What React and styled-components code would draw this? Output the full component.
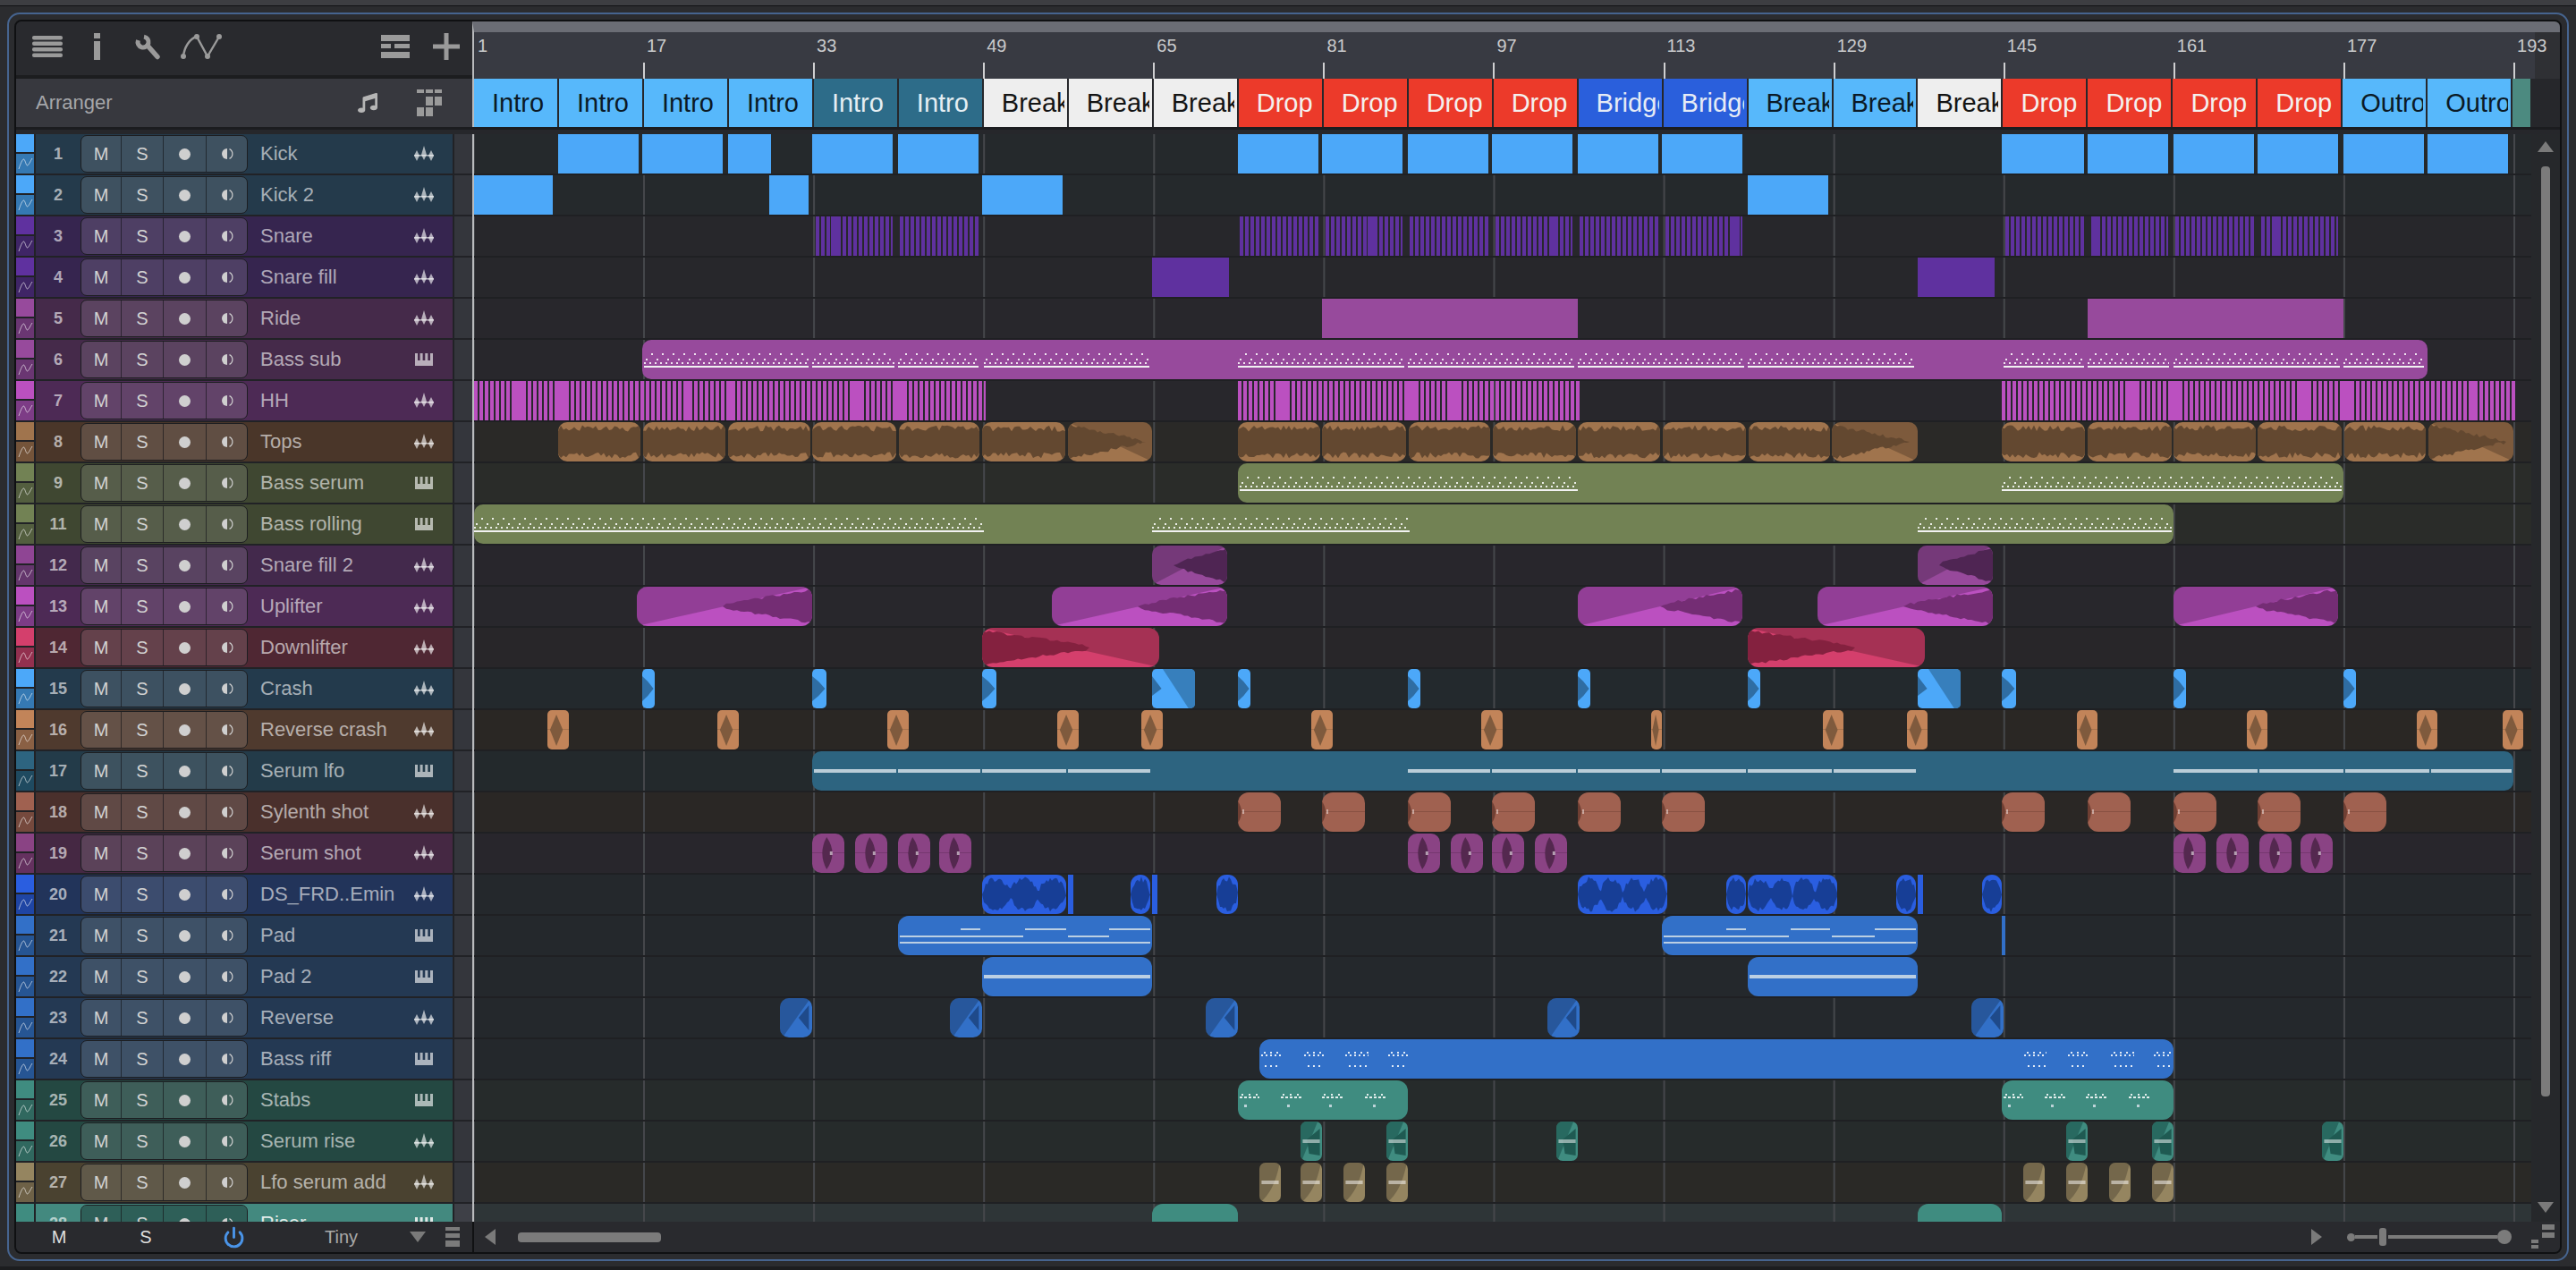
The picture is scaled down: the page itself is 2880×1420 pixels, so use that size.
import React from 'react';
import styled, { createGlobalStyle, css } from 'styled-components';
import { Power } from 'lucide-react';
import { FaMusic } from 'react-icons/fa';

const GlobalStyle = createGlobalStyle`
  html, body {
    margin: 0;
    background: #2b2c2f;
    font-family: "Liberation Sans", Arial, sans-serif;
  }
  * { box-sizing: border-box; }
`;

// page x of the first lane pixel
const ORIGIN = 530;

const pal = {
  kick: { top: '#4ca8f9', bot: '#3579b3', row: '#243a4b', lane: '#25292c', clip: '#4ca8f9', dark: '#2f6da3' },
  snare: { top: '#5f319f', bot: '#3f2566', row: '#36254f', lane: '#27272b', clip: '#5f319f', dark: '#3f2566' },
  ride: { top: '#974a9c', bot: '#6a3672', row: '#452a4a', lane: '#28272c', clip: '#974a9c', dark: '#5e2e62' },
  hh: { top: '#bb50c0', bot: '#7d3c86', row: '#4d2a55', lane: '#28272c', clip: '#bb50c0', dark: '#742d74' },
  tops: { top: '#a0744d', bot: '#74543a', row: '#4a3629', lane: '#2a2927', clip: '#a0744d', dark: '#634830' },
  bass: { top: '#728254', bot: '#535e3f', row: '#3f4731', lane: '#2a2c29', clip: '#728254', dark: '#4a5536' },
  fill2: { top: '#8f4594', bot: '#64366c', row: '#43294c', lane: '#28262c', clip: '#97499b', dark: '#4f2553' },
  down: { top: '#d43f6c', bot: '#93304f', row: '#4f2733', lane: '#282629', clip: '#d43f6c', dark: '#84213f' },
  crash: { top: '#4ca8f9', bot: '#3579b3', row: '#233a4c', lane: '#23292d', clip: '#4ca8f9', dark: '#2f6da3' },
  rev: { top: '#c28459', bot: '#8a6044', row: '#4f3a2e', lane: '#2a2724', clip: '#c28459', dark: '#7f5a3d' },
  lfo: { top: '#2d6480', bot: '#1f4a60', row: '#233b49', lane: '#23292c', clip: '#2d6480', dark: '#1f4a60' },
  syl: { top: '#a06150', bot: '#75493d', row: '#4a302c', lane: '#2a2725', clip: '#a06150', dark: '#6f3f33' },
  shot: { top: '#8a4384', bot: '#64315f', row: '#452843', lane: '#28262c', clip: '#8a4384', dark: '#54284f' },
  ds: { top: '#2a5ee0', bot: '#1f45a4', row: '#22345a', lane: '#24282c', clip: '#2a5ee0', dark: '#173e96' },
  pad: { top: '#3270c8', bot: '#265593', row: '#243953', lane: '#24282c', clip: '#3270c8', dark: '#1f4a8a' },
  teal: { top: '#3f8c80', bot: '#30685f', row: '#244842', lane: '#262b2b', clip: '#3f8c80', dark: '#1f5a52' },
  add: { top: '#958560', bot: '#6e6147', row: '#4a4230', lane: '#2a2926', clip: '#958560', dark: '#6e6147' },
  riser: { top: '#3f8c80', bot: '#3f8c80', row: '#43897f', lane: '#2e3537', clip: '#3f8c80', dark: '#1f5a52' },
};

const steps = (list, w) => list.map((x) => [x, x + w]);

const tracks = [
  {
    n: 1, name: 'Kick', p: pal.kick, icon: 'wave',
    clips: [[624, 714], [718, 808], [814, 862], [908, 998], [1004, 1094], [1384, 1474], [1478, 1568], [1574, 1664], [1668, 1758], [1764, 1854], [1858, 1948], [2238, 2330], [2334, 2424], [2430, 2520], [2524, 2614], [2620, 2710], [2714, 2804]],
  },
  {
    n: 2, name: 'Kick 2', p: pal.kick, icon: 'wave',
    clips: [[530, 618], [860, 904], [1098, 1188], [1954, 2044]],
  },
  {
    n: 3, name: 'Snare', p: pal.snare, icon: 'wave', comb: true,
    clips: [[912, 998], [1006, 1094], [1386, 1474], [1482, 1568], [1576, 1664], [1672, 1758], [1766, 1854], [1862, 1948], [2242, 2330], [2338, 2424], [2432, 2520], [2528, 2614]],
    solid: [[929, 938], [1529, 1538], [1732, 1740], [1935, 1945], [2338, 2346], [2540, 2547]],
  },
  { n: 4, name: 'Snare fill', p: pal.snare, icon: 'wave', clips: [[1288, 1374], [2144, 2230]] },
  { n: 5, name: 'Ride', p: pal.ride, icon: 'wave', clips: [[1478, 1764], [2334, 2620]] },
  {
    n: 6, name: 'Bass sub', p: pal.ride, icon: 'keys', round: 10,
    clips: [[718, 2714]],
    notes: [[720, 904], [908, 1000], [1004, 1094], [1100, 1285], [1384, 1570], [1574, 1760], [1764, 1950], [1954, 2140], [2240, 2330], [2334, 2425], [2430, 2616], [2620, 2710]].map(([a, b]) => [a, b, 'dense', 15]),
  },
  {
    n: 7, name: 'HH', p: pal.hh, icon: 'wave', comb: true,
    clips: [[530, 1102], [1384, 1768], [2238, 2812]],
    solid: [[574, 584], [622, 632], [764, 774], [812, 822], [954, 964], [1002, 1011], [1430, 1439], [1571, 1582], [1620, 1630], [2380, 2389], [2428, 2437], [2570, 2580], [2620, 2628], [2760, 2770]],
  },
  {
    n: 8, name: 'Tops', p: pal.tops, icon: 'wave', round: 10, art: 'loop',
    clips: [[624, 716], [719, 811], [814, 906], [908, 1002], [1005, 1095], [1098, 1191], [1194, 1288, 'fade'], [1384, 1476], [1478, 1572], [1575, 1666], [1669, 1762], [1764, 1856], [1859, 1952], [1955, 2046], [2048, 2144, 'fade'], [2238, 2331], [2334, 2428], [2430, 2522], [2524, 2618], [2621, 2712], [2715, 2810, 'fade']],
  },
  {
    n: 9, name: 'Bass serum', p: pal.bass, icon: 'keys', round: 10,
    clips: [[1384, 2620]],
    notes: [[1386, 1764, 'dense', 15], [2238, 2618, 'dense', 15]],
  },
  {
    n: 11, name: 'Bass rolling', p: pal.bass, icon: 'keys', round: 10,
    clips: [[530, 2430]],
    notes: [[530, 1100, 'dense', 15], [1288, 1576, 'dense', 15], [2144, 2428, 'dense', 15]],
  },
  { n: 12, name: 'Snare fill 2', p: pal.fill2, icon: 'wave', round: 10, art: 'riseLate', clips: [[1288, 1372], [2144, 2228]] },
  { n: 13, name: 'Uplifter', p: pal.hh, icon: 'wave', round: 12, art: 'rise', clips: [[712, 908], [1176, 1372], [1764, 1948], [2032, 2228], [2430, 2614]] },
  { n: 14, name: 'Downlifter', p: pal.down, icon: 'wave', round: 12, art: 'fall', clips: [[1098, 1296], [1954, 2152]] },
  {
    n: 15, name: 'Crash', p: pal.crash, icon: 'wave', round: 5, art: 'crash',
    clips: [[718, 732], [908, 924], [1098, 1114], [1288, 1336, 'crashLong'], [1384, 1398], [1574, 1588], [1764, 1778], [1954, 1968], [2144, 2192, 'crashLong'], [2238, 2254], [2430, 2444], [2620, 2634]],
  },
  {
    n: 16, name: 'Reverse crash', p: pal.rev, icon: 'wave', round: 5, art: 'diamond',
    clips: [...steps([612, 802, 992, 1182, 1276, 1466, 1656], 24), [1846, 1858], ...steps([2038, 2132, 2322, 2512, 2702, 2798], 23)],
  },
  {
    n: 17, name: 'Serum lfo', p: pal.lfo, icon: 'keys', round: 10,
    clips: [[908, 2810]],
    notes: [[910, 1002], [1004, 1096], [1098, 1192], [1194, 1286], [1574, 1666], [1668, 1762], [1764, 1856], [1858, 1952], [1954, 2048], [2050, 2142], [2430, 2524], [2526, 2620], [2622, 2716], [2718, 2808]].map(([a, b]) => [a, b, 'bar', 20, 4]),
  },
  {
    n: 18, name: 'Sylenth shot', p: pal.syl, icon: 'wave', round: 12, art: 'edge',
    clips: steps([1384, 1478, 1574, 1668, 1764, 1858, 2238, 2334, 2430, 2524, 2620], 48),
  },
  {
    n: 19, name: 'Serum shot', p: pal.shot, icon: 'wave', round: 10, art: 'lens',
    clips: steps([908, 956, 1004, 1050, 1574, 1622, 1668, 1716, 2430, 2478, 2526, 2572], 36),
  },
  {
    n: 20, name: 'DS_FRD..Emin', p: pal.ds, icon: 'wave', round: 11, art: 'blobs',
    clips: [[1098, 1192], [1194, 1200, 'flat'], [1264, 1286], [1288, 1294, 'flat'], [1360, 1384], [1764, 1864], [1930, 1952], [1954, 2054], [2120, 2142], [2144, 2150, 'flat'], [2216, 2238]],
  },
  {
    n: 21, name: 'Pad', p: pal.pad, icon: 'keys', round: 12,
    clips: [[1004, 1288], [1858, 2144], [2238, 2242, 'flat']],
    notes: [
      [1074, 1096, 'bar', 14, 2], [1146, 1192, 'bar', 14, 2], [1240, 1286, 'bar', 14, 2],
      [1006, 1144, 'bar', 22, 2], [1194, 1240, 'bar', 22, 2], [1006, 1286, 'bar', 29, 2],
      [1930, 1952, 'bar', 14, 2], [2002, 2046, 'bar', 14, 2], [2096, 2142, 'bar', 14, 2],
      [1860, 2000, 'bar', 22, 2], [2048, 2096, 'bar', 22, 2], [1860, 2142, 'bar', 29, 2],
    ],
  },
  {
    n: 22, name: 'Pad 2', p: pal.pad, icon: 'keys', round: 12,
    clips: [[1098, 1288], [1954, 2144]],
    notes: [[1100, 1286, 'bar', 20, 4], [1956, 2142, 'bar', 20, 4]],
  },
  { n: 23, name: 'Reverse', p: pal.pad, icon: 'wave', round: 10, art: 'reverse', clips: steps([872, 1062, 1348, 1730, 2204], 36) },
  {
    n: 24, name: 'Bass riff', p: pal.pad, icon: 'keys', round: 12,
    clips: [[1408, 2430]],
    notes: [[1410, 1432], [1458, 1480], [1504, 1530], [1552, 1574], [2263, 2288], [2312, 2334], [2360, 2386], [2408, 2428]].map(([a, b]) => [a, b, 'riff', 14]),
  },
  {
    n: 25, name: 'Stabs', p: pal.teal, icon: 'keys', round: 12,
    clips: [[1384, 1574], [2238, 2430]],
    notes: [
      ...[[1386, 1408], [1432, 1456], [1478, 1502], [1526, 1550], [2240, 2262], [2286, 2310], [2332, 2356], [2380, 2404]].map(([a, b]) => [a, b, 'stab', 15]),
      ...[1391, 1439, 1486, 1535, 2245, 2293, 2340, 2389].map((x) => [x, x + 3, 'bar', 27, 3]),
    ],
  },
  { n: 26, name: 'Serum rise', p: pal.teal, icon: 'wave', round: 7, art: 'riseShort', clips: steps([1454, 1550, 1740, 2310, 2406, 2596], 24) },
  { n: 27, name: 'Lfo serum add', p: pal.add, icon: 'wave', round: 7, art: 'curve', clips: steps([1408, 1454, 1502, 1550, 2262, 2310, 2358, 2406], 24) },
  { n: 28, name: 'Riser', p: pal.riser, icon: 'keys', round: 12, selected: true, clips: [[1288, 1384], [2144, 2238]] },
];

const sectionColors = {
  sky: { bg: '#57b8fb', fg: '#0b1a26' },
  sea: { bg: '#2d6c89', fg: '#e4eef3' },
  chalk: { bg: '#eeeeee', fg: '#141414' },
  red: { bg: '#ec3a2a', fg: '#f4f0ee' },
  royal: { bg: '#2a5fdc', fg: '#e6ebf5' },
};

const sections = [
  ['Intro', 'sky'], ['Intro', 'sky'], ['Intro', 'sky'], ['Intro', 'sky'],
  ['Intro', 'sea'], ['Intro', 'sea'],
  ['Break', 'chalk'], ['Break', 'chalk'], ['Break', 'chalk'],
  ['Drop', 'red'], ['Drop', 'red'], ['Drop', 'red'], ['Drop', 'red'],
  ['Bridge', 'royal'], ['Bridge', 'royal'],
  ['Break', 'sky'], ['Break', 'sky'],
  ['Break', 'chalk'],
  ['Drop', 'red'], ['Drop', 'red'], ['Drop', 'red'], ['Drop', 'red'],
  ['Outro', 'sky'], ['Outro', 'sky'],
];

const rulerBars = [1, 17, 33, 49, 65, 81, 97, 113, 129, 145, 161, 177, 193];

const Page = styled.div`
  width: 2880px;
  height: 1420px;
  overflow: hidden;
`;

const TopStrip = styled.div`
  height: 7px;
  background: #3d3e42;
  border-bottom: 1px solid #111214;
`;

const BottomStrip = styled.div`
  height: 4px;
  margin-top: 6px;
  background: #1c1d1f;
`;

const Frame = styled.div`
  height: 1396px;
  margin: 7px 8px 0;
  padding: 6px;
  border: 2px solid #46648f;
  border-radius: 14px;
`;

const Panel = styled.div`
  display: grid;
  grid-template-columns: 510px 1fr;
  grid-template-rows: 64px 54px 8px 1fr 34px;
  height: 100%;
  border: 2px solid #0f1012;
  border-radius: 8px;
  overflow: hidden;
  background: #212226;
`;

const Toolbar = styled.div`
  display: flex;
  align-items: center;
  padding: 0 14px 4px 18px;
  background: #292a2e;
  border-bottom: 4px solid #1c1d1f;
`;

const ToolSlot = styled.div`
  display: flex;
  margin-left: ${({ $ml }) => $ml}px;
  ${({ $push }) => $push && 'margin-left: auto;'}
`;

const ArrangerHead = styled.div`
  display: flex;
  align-items: center;
  padding: 0 34px 0 22px;
  background: #37383e;
`;

const ArrangerLabel = styled.span`
  flex: 1;
  font-size: 22px;
  color: #a6a7aa;
`;

const Divider = styled.div`
  grid-column: 1 / 3;
  background: #26272b;
  border-top: 3px solid #1b1c1f;
`;

const TrackList = styled.div`
  display: flex;
  flex-direction: column;
  gap: 2px;
  overflow: hidden;
  min-height: 0;
`;

const TrackRow = styled.div`
  display: flex;
  flex: none;
  height: 44px;
`;

const Swatch = styled.div`
  display: flex;
  flex-direction: column;
  gap: 2px;
  flex: none;
  width: 20px;
  margin-right: 2px;
`;

const SwatchTop = styled.div`
  flex: none;
  height: 20px;
  background: ${({ $c }) => $c};
`;

const SwatchBottom = styled.div`
  display: flex;
  align-items: center;
  justify-content: center;
  flex: 1;
  background: ${({ $c }) => $c};
`;

const TrackBody = styled.div`
  display: flex;
  align-items: center;
  flex: none;
  width: 466px;
  background: ${({ $c }) => $c};
`;

const TrackNumber = styled.div`
  flex: none;
  width: 50px;
  text-align: center;
  font-size: 18px;
  font-weight: bold;
  color: rgba(255, 255, 255, 0.62);
`;

const ButtonGroup = styled.div`
  display: grid;
  grid-template-columns: 44px 47px 48px 1fr;
  flex: none;
  width: 187px;
  height: 42px;
  border: 1.5px solid #1d1e21;
  border-radius: 7px;
  overflow: hidden;
`;

const TrackButton = styled.div`
  display: flex;
  align-items: center;
  justify-content: center;
  font-size: 20px;
  color: #d2d2d2;
  background: ${({ $dark }) => ($dark ? 'rgba(0, 0, 0, 0.3)' : 'rgba(255, 255, 255, 0.12)')};
  & + & {
    border-left: 1.5px solid rgba(20, 20, 24, 0.65);
  }
`;

const Dot = styled.span`
  width: 13px;
  height: 13px;
  border-radius: 50%;
  background: #cfcfcf;
`;

const TrackName = styled.div`
  flex: 1;
  padding-left: 14px;
  font-size: 22px;
  white-space: nowrap;
  color: ${({ $on }) => ($on ? '#e2ecea' : 'rgba(255, 255, 255, 0.6)')};
`;

const TrackIcon = styled.div`
  display: flex;
  justify-content: center;
  flex: none;
  width: 24px;
  margin-right: 20px;
`;

const Gutter = styled.div`
  flex: none;
  width: 20px;
  margin-left: 2px;
  background: ${({ $on }) => ($on ? '#3e4047' : '#34363c')};
`;

const Ruler = styled.div`
  display: flex;
  height: 64px;
  overflow: hidden;
  border-left: 2px solid #b9bbbd;
  border-top: 12px solid #6b6d75;
  background: linear-gradient(90deg, #383a42 calc(100% - 28px), #2f3034 0);
`;

const RulerCell = styled.div`
  display: flex;
  flex-direction: column;
  justify-content: space-between;
  flex: none;
  width: ${({ $first }) => ($first ? 189 : 190.1)}px;
`;

const RulerLabel = styled.span`
  padding: 4px 0 0 4px;
  font-size: 20px;
  line-height: 22px;
  color: #c9cacc;
`;

const RulerTick = styled.span`
  width: 2px;
  height: 18px;
  background: ${({ $hide }) => ($hide ? 'transparent' : '#cfcfd1')};
`;

const SectionStrip = styled.div`
  display: grid;
  grid-template-columns: repeat(24, 92.98px) 20px;
  column-gap: 2px;
  border-left: 2px solid #b9bbbd;
  background: #26272b;
`;

const SectionBlock = styled.div`
  padding: 0 3px 0 20px;
  background: ${({ $bg }) => $bg};
  color: ${({ $fg }) => $fg};
  font-size: 29px;
  line-height: 54px;
`;

const SectionText = styled.span`
  display: block;
  overflow: hidden;
  white-space: nowrap;
`;

const SectionEnd = styled.div`
  background: #4c8a80;
`;

const Timeline = styled.div`
  display: flex;
  min-height: 0;
  overflow: hidden;
  border-left: 2px solid #b9bbbd;
`;

const LaneStack = styled.div`
  display: flex;
  flex-direction: column;
  gap: 2px;
  flex: none;
  width: 2300px;
  overflow: hidden;
  background: #1f2023;
`;

const Lane = styled.div`
  position: relative;
  flex: none;
  height: 44px;
  background-color: ${({ $c }) => $c};
  background-image: linear-gradient(90deg, #45474b 2px, transparent 2px);
  background-size: 190.1px 100%;
  background-position: 189px 0;
`;

const combFill = (c) => `repeating-linear-gradient(90deg, ${c} 0 4px, transparent 4px 6px)`;

const Clip = styled.div`
  position: absolute;
  top: 0;
  height: 44px;
  overflow: hidden;
  border-radius: ${({ $r }) => $r || 0}px;
  background: ${({ $c, $comb }) => ($comb ? combFill($c) : $c)};
`;

const noteColor = 'rgba(255, 255, 255, 0.85)';

const noteKinds = {
  bar: css`
    background: #d3dfe8;
    opacity: 0.85;
  `,
  dense: css`
    height: 16px;
    background:
      linear-gradient(90deg, ${noteColor} 2px, transparent 2px) 8px 0 / 12px 2px repeat-x,
      linear-gradient(90deg, ${noteColor} 2px, transparent 2px) 2px 6px / 12px 2px repeat-x,
      linear-gradient(90deg, ${noteColor} 2px, transparent 2px) 0 10px / 6px 2px repeat-x,
      linear-gradient(#f2f2f2, #f2f2f2) 0 14px / 100% 2px no-repeat;
  `,
  riff: css`
    height: 20px;
    background:
      linear-gradient(90deg, ${noteColor} 2px, transparent 2px) 3px 0 / 7px 2px repeat-x,
      linear-gradient(90deg, ${noteColor} 2px, transparent 2px) 0 3px / 5px 2px repeat-x,
      linear-gradient(90deg, ${noteColor} 2px, transparent 2px) 4px 15px / 6px 2px repeat-x;
  `,
  stab: css`
    height: 6px;
    background:
      linear-gradient(90deg, ${noteColor} 2px, transparent 2px) 2px 0 / 8px 2px repeat-x,
      linear-gradient(90deg, ${noteColor} 3px, transparent 3px) 0 3px / 5px 2px repeat-x;
  `,
};

const Note = styled.div`
  position: absolute;
  ${({ $kind }) => noteKinds[$kind]}
`;

const ArtSvg = styled.svg`
  position: absolute;
  inset: 0;
  display: block;
`;

const VScroll = styled.div`
  display: flex;
  flex-direction: column;
  align-items: center;
  flex: 1;
  padding: 8px 0 10px;
  background: #26282b;
`;

const Arrow = styled.span`
  flex: none;
  background: #7a7a7a;
  ${({ $dir }) => ({
    up: 'width: 18px; height: 12px; clip-path: polygon(50% 0, 100% 100%, 0 100%);',
    down: 'width: 18px; height: 12px; clip-path: polygon(0 0, 100% 0, 50% 100%);',
    left: 'width: 12px; height: 18px; clip-path: polygon(100% 0, 100% 100%, 0 50%);',
    right: 'width: 12px; height: 18px; clip-path: polygon(0 0, 100% 50%, 0 100%);',
  }[$dir])}
`;

const VThumb = styled.div`
  flex: none;
  width: 10px;
  height: 1040px;
  margin-top: 16px;
  border-radius: 4px;
  background: #7b7b7b;
`;

const VSpacer = styled.div`
  flex: 1;
`;

const FooterLeft = styled.div`
  display: grid;
  grid-template-columns: 96px 98px 98px 1fr 34px 44px;
  align-items: center;
  background: #292a2e;
  font-size: 20px;
`;

const FooterCell = styled.div`
  display: flex;
  justify-content: center;
  color: #dedede;
`;

const TinyLabel = styled.div`
  padding-left: 53px;
  color: #a9a9a9;
`;

const FooterRight = styled.div`
  display: flex;
  align-items: center;
  padding: 0 6px 0 12px;
  background: #292a2e;
  border-left: 2px solid #101113;
`;

const HThumb = styled.div`
  flex: none;
  width: 160px;
  height: 11px;
  margin-left: 25px;
  border-radius: 4px;
  background: #7b7b7b;
`;

const ZoomSlider = styled.div`
  display: flex;
  align-items: center;
  flex: none;
  width: 184px;
  margin: 0 22px 0 28px;
`;

const ZoomEnd = styled.span`
  flex: none;
  width: ${({ $size }) => $size}px;
  height: ${({ $size }) => $size}px;
  border-radius: 50%;
  background: #7b7b7b;
`;

const ZoomLine = styled.span`
  flex: ${({ $grow }) => $grow};
  height: 4px;
  background: #7b7b7b;
`;

const ZoomThumb = styled.span`
  flex: none;
  width: 8px;
  height: 20px;
  margin: 0 2px;
  border-radius: 3px;
  background: #7b7b7b;
`;

const ViewSizes = styled.div`
  display: flex;
  align-items: flex-end;
  gap: 4px;
  flex: none;
  width: 26px;
  height: 26px;
`;

const SizeBars = styled.div`
  display: flex;
  flex-direction: column;
  gap: ${({ $big }) => ($big ? 3 : 2)}px;
  flex: none;
  width: ${({ $big }) => ($big ? 14 : 8)}px;
  margin-bottom: ${({ $big }) => ($big ? 12 : 0)}px;
`;

const SizeBar = styled.span`
  height: ${({ $big }) => ($big ? 6 : 4)}px;
  background: #7b7b7b;
`;

const rng = (seed) => {
  let s = seed;
  return () => {
    s = (s * 9301 + 49297) % 233280;
    return s / 233280;
  };
};

// upper and lower edge of a waveform round the clip centre
const wavePath = (w, env, seed, step = 3, jitter = 5) => {
  const r = rng(seed);
  const up = [];
  const low = [];
  for (let x = 0; x <= w + step; x += step) {
    const a = env(Math.min(x / w, 1));
    const j = a > 0 ? 1 : 0;
    up.push(`${x} ${(22 - a - (r() - 0.5) * jitter * j).toFixed(1)}`);
    low.push(`${x} ${(22 + a + (r() - 0.5) * jitter * j).toFixed(1)}`);
  }
  return `M${up.join('L')}L${low.reverse().join('L')}Z`;
};

const SHADE = 'rgba(0, 0, 0, 0.22)';

const ClipArt = ({ kind, w, dark, seed }) => {
  let body = null;
  const mark = <rect x={w * 0.1} y="20" width={w * 0.8} height="4" fill="rgba(255,255,255,0.5)" />;
  switch (kind) {
    case 'loop':
      body = <path d={wavePath(w, () => 15, seed, 3, 7)} fill={dark} />;
      break;
    case 'fade':
      body = (
        <>
          <polygon points={`0,0 ${w},0 ${w},44`} fill={SHADE} />
          <path d={wavePath(w, (t) => (t < 0.9 ? 18 * (1 - t / 0.9) + 1 : 0), seed, 3, 4)} fill={dark} />
        </>
      );
      break;
    case 'rise':
    case 'riseLate': {
      const from = kind === 'rise' ? 0.5 : 0.3;
      body = (
        <>
          <polygon points={`0,0 ${w},0 0,44`} fill={SHADE} />
          <path d={wavePath(w, (t) => (t > from ? 2 + 17 * (t - from) / (1 - from) : 0), seed, 4, 3)} fill={dark} />
        </>
      );
      break;
    }
    case 'fall':
      body = (
        <>
          <polygon points={`0,0 ${w},0 ${w},44`} fill={SHADE} />
          <path d={wavePath(w, (t) => (t < 0.6 ? 2 + 17 * (1 - t / 0.6) : 0), seed, 4, 3)} fill={dark} />
        </>
      );
      break;
    case 'crash':
      body = <polygon points={`0,8 ${w * 0.45},14 ${w * 0.9},22 ${w * 0.45},30 0,36`} fill={dark} />;
      break;
    case 'crashLong':
      body = (
        <>
          <polygon points={`${w * 0.25},0 ${w},0 ${w},44 ${w * 0.85},44`} fill={dark} opacity="0.7" />
          <polygon points={`0,8 ${w * 0.22},22 0,30`} fill={dark} />
        </>
      );
      break;
    case 'diamond':
      body = (
        <>
          <rect x="0" y="21" width={w} height="1" fill={dark} opacity="0.4" />
          <polygon points={`${w * 0.42},5 ${w * 0.72},22 ${w * 0.42},40 ${w * 0.12},22`} fill={dark} />
        </>
      );
      break;
    case 'edge':
      body = (
        <>
          <rect x="0" y="21" width={w} height="1" fill={dark} opacity="0.5" />
          <path d="M0 10Q8 22 0 34Z" fill={dark} />
          <rect x="5" y="19" width="2" height="5" fill="rgba(255,255,255,0.45)" />
        </>
      );
      break;
    case 'lens':
      body = (
        <>
          <rect x="0" y="21" width={w} height="1" fill={dark} opacity="0.4" />
          <path d={`M${w * 0.45} 4Q${w * 0.8} 22 ${w * 0.45} 40Q${w * 0.18} 22 ${w * 0.45} 4Z`} fill={dark} />
          <rect x={w * 0.55} y="20" width="3" height="4" fill="rgba(255,255,255,0.55)" />
        </>
      );
      break;
    case 'blobs': {
      const n = Math.max(1, Math.floor(w / 25));
      body = <path d={wavePath(w, (t) => 17 * Math.pow(Math.abs(Math.sin(t * Math.PI * n)), 0.55), seed, 2, 6)} fill={dark} />;
      break;
    }
    case 'reverse':
      body = (
        <>
          <polygon points={`0,0 ${w * 0.95},0 ${w * 0.08},44 0,44`} fill={SHADE} />
          <polygon points={`${w * 0.58},22 ${w * 0.9},8 ${w * 0.9},36`} fill={dark} />
        </>
      );
      break;
    case 'riseShort':
      body = (
        <>
          <polygon points={`0,0 ${w * 0.8},0 ${w * 0.05},44 0,44`} fill={dark} opacity="0.7" />
          <polygon points={`${w * 0.9},8 ${w * 0.9},38 ${w * 0.4},36 ${w * 0.3},20`} fill={dark} />
          {mark}
        </>
      );
      break;
    case 'curve':
      body = (
        <>
          <path d={`M0 0L${w * 0.95} 0Q${w * 0.7} 32 ${w * 0.05} 44L0 44Z`} fill={SHADE} />
          {mark}
        </>
      );
      break;
    default:
      return null;
  }
  return (
    <ArtSvg width={w} height="44" viewBox={`0 0 ${w} 44`}>
      {body}
    </ArtSvg>
  );
};

const Hamburger = () => (
  <svg width="34" height="24" viewBox="0 0 34 24" fill="#9a9a9a">
    <rect y="0" width="34" height="4.5" rx="2" />
    <rect y="6.5" width="34" height="4.5" rx="2" />
    <rect y="13" width="34" height="4.5" rx="2" />
    <rect y="19.5" width="34" height="4.5" rx="2" />
  </svg>
);

const InfoIcon = () => (
  <svg width="8" height="30" viewBox="0 0 8 30" fill="#9a9a9a">
    <rect width="7" height="6" />
    <rect y="9" width="7" height="21" />
  </svg>
);

const WrenchIcon = () => (
  <svg width="30" height="30" viewBox="0 0 30 30" fill="none" stroke="#9a9a9a" strokeLinecap="round">
    <path d="M11 4.1A6 6 0 1 1 4.4 8" strokeWidth="5" strokeLinecap="butt" />
    <path d="M15 14L26 26.5" strokeWidth="5.5" />
  </svg>
);

const AutomationIcon = () => (
  <svg width="46" height="30" viewBox="0 0 46 30" fill="none" stroke="#9a9a9a" strokeWidth="2.4">
    <path d="M3 26C4 16 10 6 18 4L30 26 43 4" />
    <g fill="#9a9a9a" stroke="none">
      <circle cx="3" cy="26" r="3" />
      <circle cx="18" cy="4" r="3" />
      <circle cx="30" cy="26" r="3" />
      <circle cx="43" cy="4" r="3" />
    </g>
  </svg>
);

const ListIcon = () => (
  <svg width="32" height="26" viewBox="0 0 32 26" fill="#9a9a9a">
    <rect width="32" height="7" />
    <rect y="10" width="11" height="5" />
    <rect x="15" y="10" width="17" height="5" />
    <rect y="19" width="32" height="7" />
  </svg>
);

const PlusIcon = () => (
  <svg width="30" height="30" viewBox="0 0 30 30" fill="#9a9a9a">
    <rect x="12.5" width="5" height="30" />
    <rect y="12.5" width="30" height="5" />
  </svg>
);

const GridIcon = () => (
  <svg width="28" height="30" viewBox="0 0 28 30" fill="#9a9a9a">
    <rect x="0" width="8" height="4" />
    <rect x="10" width="8" height="4" />
    <rect x="20" width="8" height="4" />
    <rect x="10" y="8" width="8" height="10" />
    <rect x="20" y="8" width="8" height="10" />
    <rect x="0" y="20" width="8" height="10" />
    <rect x="10" y="20" width="8" height="10" />
  </svg>
);

const Squiggle = () => (
  <svg width="17" height="14" viewBox="0 0 17 14" fill="none" stroke="rgba(255,255,255,0.6)" strokeWidth="1">
    <path d="M1 13C3 7 5 2 6.5 2 8 2 9 9 10.5 9 12 9 14 4 16 1" />
  </svg>
);

const MonitorIcon = () => (
  <svg width="14" height="14" viewBox="0 0 14 14">
    <path d="M7 1A6 6 0 0 0 7 13Z" fill="#cfcfcf" />
    <path d="M9.5 1.6A6 6 0 0 1 9.5 12.4" fill="none" stroke="#cfcfcf" strokeWidth="1.2" />
  </svg>
);

const WaveIcon = ({ light }) => (
  <svg width="24" height="18" viewBox="0 0 24 18" fill={light ? '#dfe9e7' : 'rgba(255,255,255,0.62)'}>
    <polygon points="4,5 7,11 4,17 1,11" />
    <polygon points="12,0 15,10 12,16 9,10" />
    <polygon points="20,5 23,11 20,17 17,11" />
    <rect x="1" y="10" width="22" height="1.6" />
  </svg>
);

const KeysIcon = ({ light }) => (
  <svg width="20" height="14" viewBox="0 0 20 14" fill={light ? '#dfe9e7' : 'rgba(255,255,255,0.62)'}>
    <rect y="8" width="20" height="6" />
    <rect x="0" width="3" height="8" />
    <rect x="5.6" width="3" height="8" />
    <rect x="11.3" width="3" height="8" />
    <rect x="17" width="3" height="8" />
  </svg>
);

const MenuBars = () => (
  <svg width="16" height="22" viewBox="0 0 16 22" fill="#7b7b7b">
    <rect width="16" height="4" />
    <rect y="7" width="16" height="5" />
    <rect y="15" width="16" height="7" />
  </svg>
);

const TrackHeader = ({ track }) => {
  const { n, name, p, icon, selected } = track;
  return (
    <TrackRow>
      <Swatch>
        <SwatchTop $c={p.top} />
        <SwatchBottom $c={p.bot}>
          <Squiggle />
        </SwatchBottom>
      </Swatch>
      <TrackBody $c={p.row}>
        <TrackNumber>{n}</TrackNumber>
        <ButtonGroup>
          <TrackButton $dark={selected}>M</TrackButton>
          <TrackButton $dark={selected}>S</TrackButton>
          <TrackButton $dark={selected}><Dot /></TrackButton>
          <TrackButton $dark={selected}><MonitorIcon /></TrackButton>
        </ButtonGroup>
        <TrackName $on={selected}>{name}</TrackName>
        <TrackIcon>
          {icon === 'wave' ? <WaveIcon light={selected} /> : <KeysIcon light={selected} />}
        </TrackIcon>
      </TrackBody>
      <Gutter $on={selected} />
    </TrackRow>
  );
};

const TrackLane = ({ track }) => {
  const { p, clips, solid = [], notes = [], comb, round, art } = track;
  return (
    <Lane $c={p.lane}>
      {clips.map(([a, b, kind], i) => {
        const flat = kind === 'flat';
        const artKind = flat ? null : kind || art;
        return (
          <Clip key={a} $c={p.clip} $comb={comb} $r={flat ? 0 : round} style={{ left: a - ORIGIN, width: b - a }}>
            {artKind && <ClipArt kind={artKind} w={b - a} dark={p.dark} seed={a + i * 7} />}
          </Clip>
        );
      })}
      {solid.map(([a, b]) => (
        <Clip key={`s${a}`} $c={p.clip} style={{ left: a - ORIGIN, width: b - a }} />
      ))}
      {notes.map(([a, b, kind, y, h]) => (
        <Note key={`${a}-${y}`} $kind={kind} style={{ left: a - ORIGIN, width: b - a, top: y, height: h }} />
      ))}
    </Lane>
  );
};

const App = () => (
  <Page>
    <GlobalStyle />
    <TopStrip />
    <Frame>
      <Panel>
        <Toolbar>
          <ToolSlot><Hamburger /></ToolSlot>
          <ToolSlot $ml={35}><InfoIcon /></ToolSlot>
          <ToolSlot $ml={37}><WrenchIcon /></ToolSlot>
          <ToolSlot $ml={22}><AutomationIcon /></ToolSlot>
          <ToolSlot $push><ListIcon /></ToolSlot>
          <ToolSlot $ml={26}><PlusIcon /></ToolSlot>
        </Toolbar>
        <Ruler>
          {rulerBars.map((bar, i) => (
            <RulerCell key={bar} $first={i === 0}>
              <RulerLabel>{bar}</RulerLabel>
              <RulerTick $hide={i === 0} />
            </RulerCell>
          ))}
        </Ruler>

        <ArrangerHead>
          <ArrangerLabel>Arranger</ArrangerLabel>
          <FaMusic size={22} color="#b5b5b5" />
          <ToolSlot $ml={44}><GridIcon /></ToolSlot>
        </ArrangerHead>
        <SectionStrip>
          {sections.map(([label, tone], i) => (
            <SectionBlock key={i} $bg={sectionColors[tone].bg} $fg={sectionColors[tone].fg}>
              <SectionText>{label}</SectionText>
            </SectionBlock>
          ))}
          <SectionEnd />
        </SectionStrip>

        <Divider />

        <TrackList>
          {tracks.map((track) => (
            <TrackHeader key={track.n} track={track} />
          ))}
        </TrackList>
        <Timeline>
          <LaneStack>
            {tracks.map((track) => (
              <TrackLane key={track.n} track={track} />
            ))}
          </LaneStack>
          <VScroll>
            <Arrow $dir="up" />
            <VThumb />
            <VSpacer />
            <Arrow $dir="down" />
          </VScroll>
        </Timeline>

        <FooterLeft>
          <FooterCell>M</FooterCell>
          <FooterCell>S</FooterCell>
          <FooterCell><Power size={25} color="#4a94e8" strokeWidth={2.8} /></FooterCell>
          <TinyLabel>Tiny</TinyLabel>
          <FooterCell><Arrow $dir="down" /></FooterCell>
          <FooterCell><MenuBars /></FooterCell>
        </FooterLeft>
        <FooterRight>
          <Arrow $dir="left" />
          <HThumb />
          <VSpacer />
          <Arrow $dir="right" />
          <ZoomSlider>
            <ZoomEnd $size={9} />
            <ZoomLine $grow={1} />
            <ZoomThumb />
            <ZoomLine $grow={5} />
            <ZoomEnd $size={16} />
          </ZoomSlider>
          <ViewSizes>
            <SizeBars>
              <SizeBar />
              <SizeBar />
            </SizeBars>
            <SizeBars $big>
              <SizeBar $big />
              <SizeBar $big />
            </SizeBars>
          </ViewSizes>
        </FooterRight>
      </Panel>
    </Frame>
    <BottomStrip />
  </Page>
);

export default App;
